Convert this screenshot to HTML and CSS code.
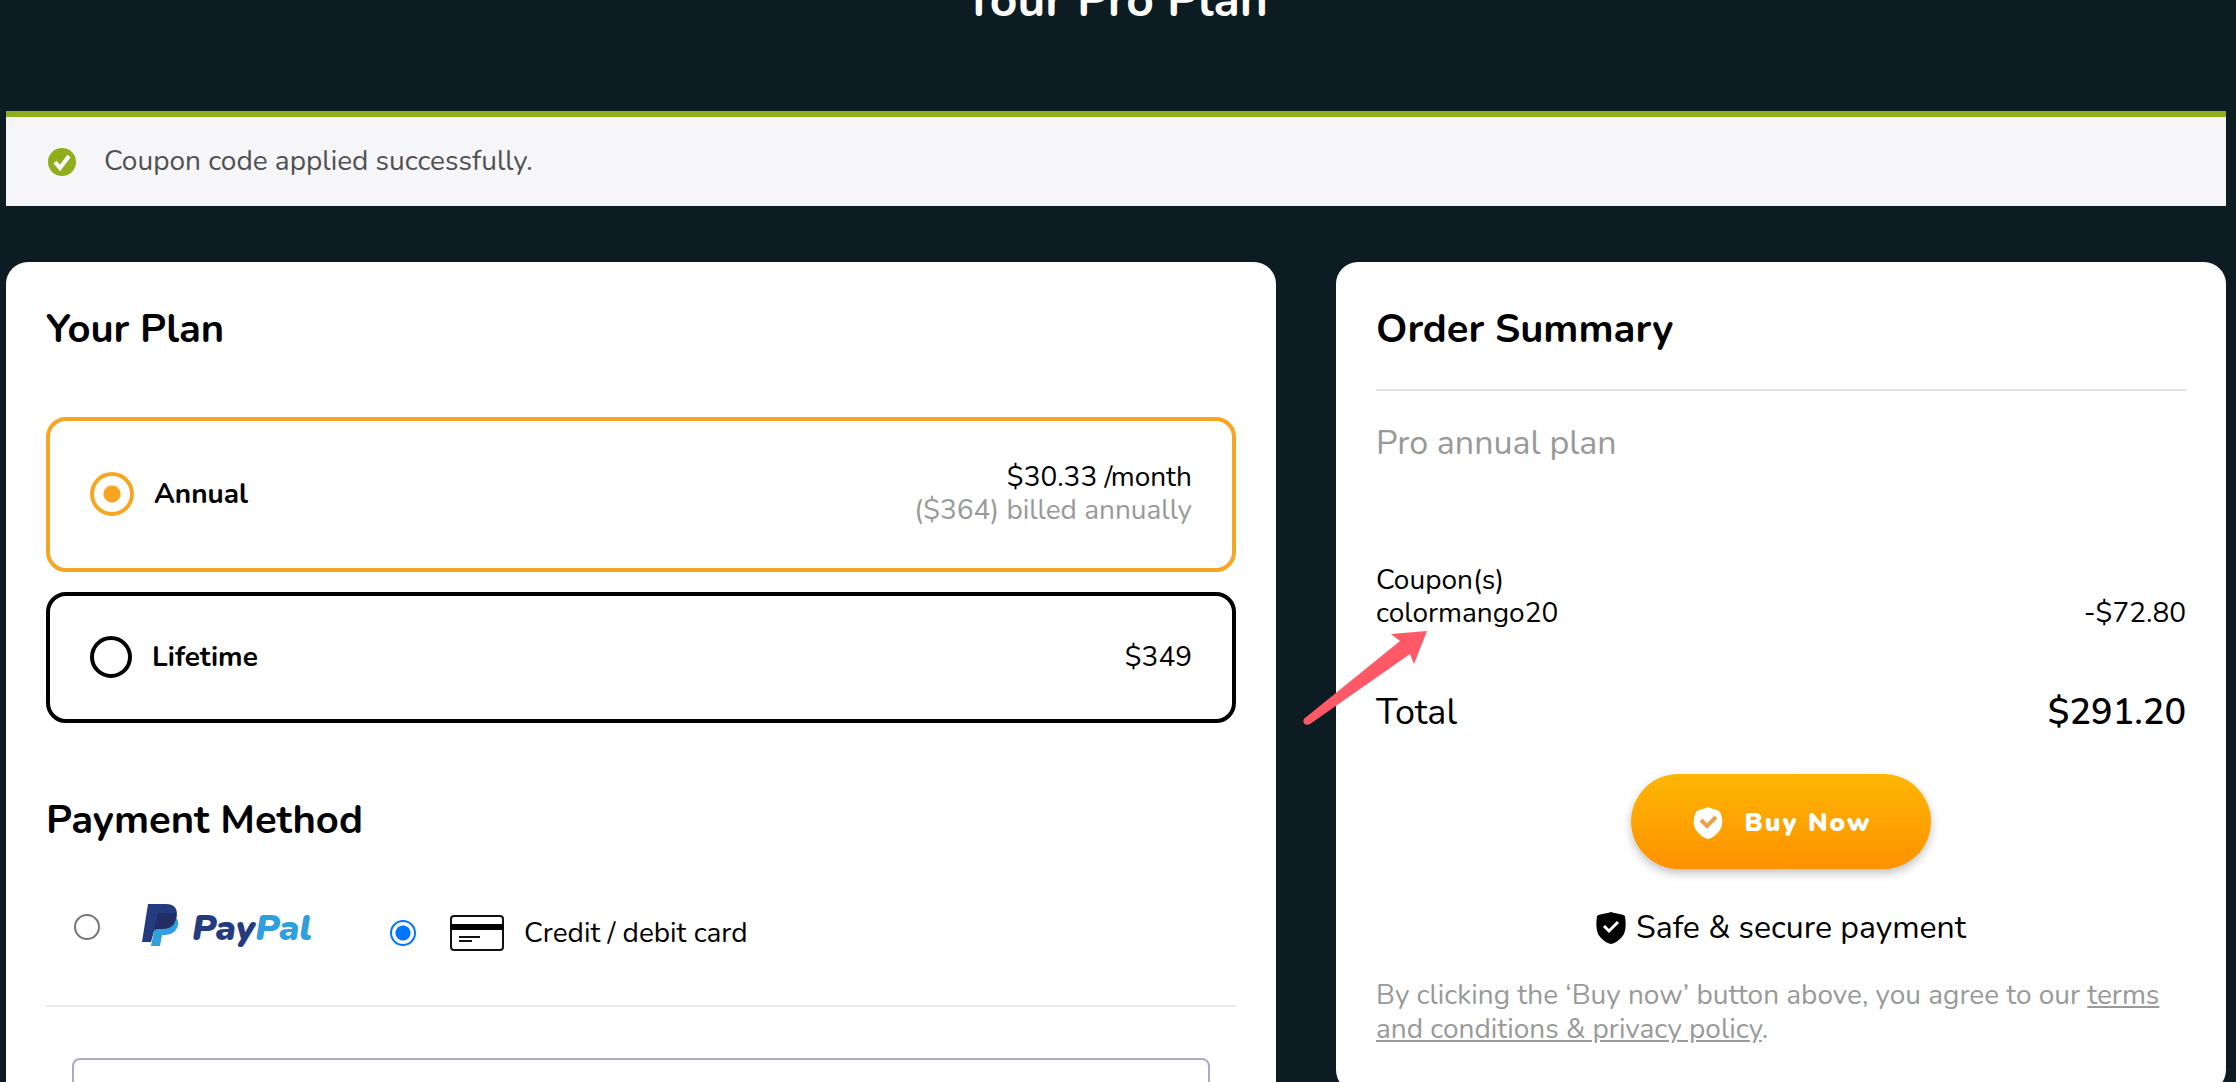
FILE: index.html
```html
<!DOCTYPE html>
<html lang="en">
<head>
    <meta charset="UTF-8">
    <meta name="viewport" content="width=device-width, initial-scale=1.0">
    <title>Your Pro Plan</title>
    <link rel="stylesheet" href="styles.css">
</head>
<body>
    <header class="page-header">
        <h1>Your Pro Plan</h1>
    </header>

    <div class="notice" role="status">
        <svg class="notice-icon" viewBox="0 0 28 28" aria-hidden="true">
            <circle cx="14" cy="14" r="14" fill="#8fae1b"/>
            <path d="M7 14l5 6L21 8" fill="none" stroke="#fff" stroke-width="4"/>
        </svg>
        <span>Coupon code applied successfully.</span>
    </div>

    <main class="checkout">
        <section class="card">
            <h2>Your Plan</h2>

            <div class="plans">
                <label class="plan">
                    <input type="radio" name="plan" value="annual" checked>
                    <span class="plan-name">Annual</span>
                    <span class="plan-price">
                        <span>$30.33 /month</span>
                        <span class="muted">($364) billed annually</span>
                    </span>
                </label>
                <label class="plan">
                    <input type="radio" name="plan" value="lifetime">
                    <span class="plan-name">Lifetime</span>
                    <span class="plan-price">$349</span>
                </label>
            </div>

            <h2>Payment Method</h2>

            <div class="payment-methods">
                <label class="payment-method paypal">
                    <input type="radio" name="payment" value="paypal">
                    <svg class="paypal-logo" viewBox="0 0 168 48" role="img" aria-label="PayPal">
                        <path d="M6 1h18c9 0 13 6 10 15-2 9-8 12-17 12h-5l-3 11H0z" fill="#253b80"/>
                        <path d="M33 14c4 3 4 7 2 11-3 6-8 7-15 7l-2 11H9l3-15c1-3 2-4 5-4 9 0 14-3 16-10z" fill="#2f9fdd"/>
                        <path d="M16 10h18c1 2 0 5 0 6-2 8-7 10-15 10-4 0-6 0-7 2z" fill="#222d65"/>
                        <text x="50" y="37" class="paypal-text"><tspan fill="#253b80">Pay</tspan><tspan fill="#2f9fdd">Pal</tspan></text>
                    </svg>
                </label>
                <label class="payment-method credit">
                    <input type="radio" name="payment" value="card" checked>
                    <svg class="card-icon" viewBox="0 0 54 38" aria-hidden="true">
                        <rect x="1" y="2" width="52" height="34" rx="3" fill="#fff" stroke="#111" stroke-width="2"/>
                        <path d="M0 13h54" stroke="#000" stroke-width="6"/>
                        <path d="M9 23h21M9 27h13" stroke="#111" stroke-width="2"/>
                    </svg>
                    <span>Credit / debit card</span>
                </label>
            </div>

            <div class="card-form">
                <input type="text" class="card-number" aria-label="Card number" autocomplete="cc-number">
            </div>
        </section>

        <section class="card summary">
            <h2>Order Summary</h2>
            <p class="product muted">Pro annual plan</p>

            <div class="coupon">
                <span>Coupon(s)<br>colormango20</span>
                <span>-$72.80</span>
                <svg class="arrow" viewBox="0 0 124 96" aria-hidden="true">
                    <path d="M124 1L88 4l9 7L2 88c-4 3 0 9 5 6l100-70 4 10z" fill="#ff5967"/>
                </svg>
            </div>

            <div class="total">
                <span>Total</span>
                <strong>$291.20</strong>
            </div>

            <button type="button" class="buy-btn">
                <svg class="shield" viewBox="0 0 30 32" aria-hidden="true">
                    <path d="M15 0c4 2 9 2 12 5 3 6 3 13 0 18-3 4-7 8-12 9-5-1-9-5-12-9-3-5-3-12 0-18 3-3 8-3 12-5z" fill="#fff"/>
                    <path d="M8 13l6 6 9-9" fill="none" stroke="#e9a14e" stroke-width="4"/>
                </svg>
                Buy Now
            </button>

            <p class="secure">
                <svg class="shield" viewBox="0 0 30 32" aria-hidden="true">
                    <path d="M15 0c4 2 10 1 14 4 1 7 1 13-1 18-3 5-8 9-13 10-5-1-10-5-13-10-2-5-2-11-1-18 4-3 10-2 14-4z" fill="#000"/>
                    <path d="M8 14l5 5 9-9" fill="none" stroke="#fff" stroke-width="3"/>
                </svg>
                Safe &amp; secure payment
            </p>

            <p class="terms muted">By clicking the ‘Buy now’ button above, you agree to our <a href="#">terms and conditions &amp; privacy policy</a>.</p>
        </section>
    </main>
</body>
</html>
```
FILE: styles.css
```css
* {
    margin: 0;
    padding: 0;
    box-sizing: border-box;
}

body {
    background-color: #0d1c22;
    color: #000;
    font-family: Nunito, Lato, sans-serif;
    font-size: 28px;
    line-height: 33px;
    padding: 0 10px 0 6px;
}

h1 {
    color: #fff;
    font-size: 48px;
    line-height: 60px;
    text-align: center;
}

h2 {
    font-size: 40px;
    line-height: 54px;
}

/* the title is scrolled half out of view */
.page-header {
    margin-top: -30px;
    padding-bottom: 81px;
}

.muted {
    color: #999;
}

.notice {
    display: flex;
    align-items: center;
    gap: 28px;
    padding: 28px 42px;
    margin-bottom: 56px;
    background-color: #f6f6f8;
    border-top: 6px solid #8fae1b;
    color: #515151;
}

.notice-icon {
    width: 28px;
    height: 28px;
}

.checkout {
    display: grid;
    grid-template-columns: minmax(0, 127fr) minmax(0, 89fr);
    align-items: start;
    gap: 60px;
}

.card {
    background-color: #fff;
    border-radius: 22px;
    padding: 40px;
}

/* plans */
.plans {
    display: flex;
    flex-direction: column;
    gap: 20px;
    margin: 61px 0 70px;
}

.plan {
    display: flex;
    align-items: center;
    gap: 20px;
    padding: 40px 40px 41px;
    border: 4px solid #000;
    border-radius: 20px;
    cursor: pointer;
}

.plan:has(input:checked) {
    border-color: #f7a623;
}

.plan input {
    appearance: none;
    width: 42px;
    height: 42px;
    border: 4px solid #000;
    border-radius: 50%;
}

.plan input:checked {
    width: 44px;
    height: 44px;
    border-color: #f7a623;
    background: radial-gradient(circle, #f7a623 8px, #fff 9px);
}

.plan-name {
    font-weight: 700;
}

.plan-price {
    margin-left: auto;
    text-align: right;
}

.plan-price span {
    display: block;
}

/* payment */
.payment-methods {
    display: flex;
    align-items: flex-start;
    gap: 80px;
    padding: 56px 28px 42px;
    border-bottom: 2px solid #e8e8ee;
}

.payment-method {
    display: flex;
    align-items: center;
    height: 60px;
}

.paypal {
    gap: 42px;
    height: 48px;
}

.credit span {
    margin-left: 20px;
}

.payment-method input {
    appearance: none;
    width: 26px;
    height: 26px;
    border: 2px solid #767676;
    border-radius: 50%;
}

.payment-method input:checked {
    border-color: #0075ff;
    background: radial-gradient(circle, #0075ff 7px, #fff 8px);
}

.paypal-logo {
    width: 168px;
    height: 48px;
    overflow: visible;
}

.paypal-text {
    font-family: Nunito, Lato, sans-serif;
    font-size: 36px;
    font-weight: 900;
    font-style: italic;
}

.card-icon {
    width: 54px;
    height: 38px;
    margin-left: 34px;
}

.card-form {
    padding: 51px 26px 0;
}

.card-number {
    width: 100%;
    height: 92px;
    padding: 0 24px;
    border: 2px solid #b2a8c4;
    border-radius: 8px;
    font: inherit;
}

/* order summary */
.summary {
    padding-bottom: 46px;
}

.summary h2 {
    padding-bottom: 33px;
    box-sizing: content-box;
    border-bottom: 2px solid #e3e3e3;
}

.product {
    margin: 30px 0 99px;
    font-size: 34px;
    line-height: 44px;
}

.coupon {
    position: relative;
    display: flex;
    justify-content: space-between;
    align-items: flex-end;
}

.arrow {
    position: absolute;
    left: -73px;
    top: 66px;
    width: 124px;
    height: 96px;
}

.total {
    display: flex;
    justify-content: space-between;
    margin: 61px 0 39px;
    font-size: 36px;
    line-height: 44px;
}

.total strong {
    font-weight: 600;
}

.buy-btn {
    display: flex;
    align-items: center;
    justify-content: center;
    gap: 22px;
    width: 300px;
    height: 95px;
    margin: 0 auto;
    padding: 2px 0 0 2px;
    border: none;
    border-radius: 48px;
    background: linear-gradient(#fdb605, #fe9100);
    box-shadow: 0 4px 10px rgba(0, 0, 0, 0.25);
    color: #fff;
    font-family: inherit;
    font-size: 26px;
    font-weight: 900;
    letter-spacing: 2px;
    cursor: pointer;
}

.shield {
    width: 30px;
    height: 32px;
}

.secure {
    display: flex;
    align-items: center;
    justify-content: center;
    gap: 10px;
    margin: 39px 0 30px;
    font-size: 32px;
    line-height: 40px;
}

.terms {
    line-height: 34px;
}

.terms a {
    color: inherit;
}
```
